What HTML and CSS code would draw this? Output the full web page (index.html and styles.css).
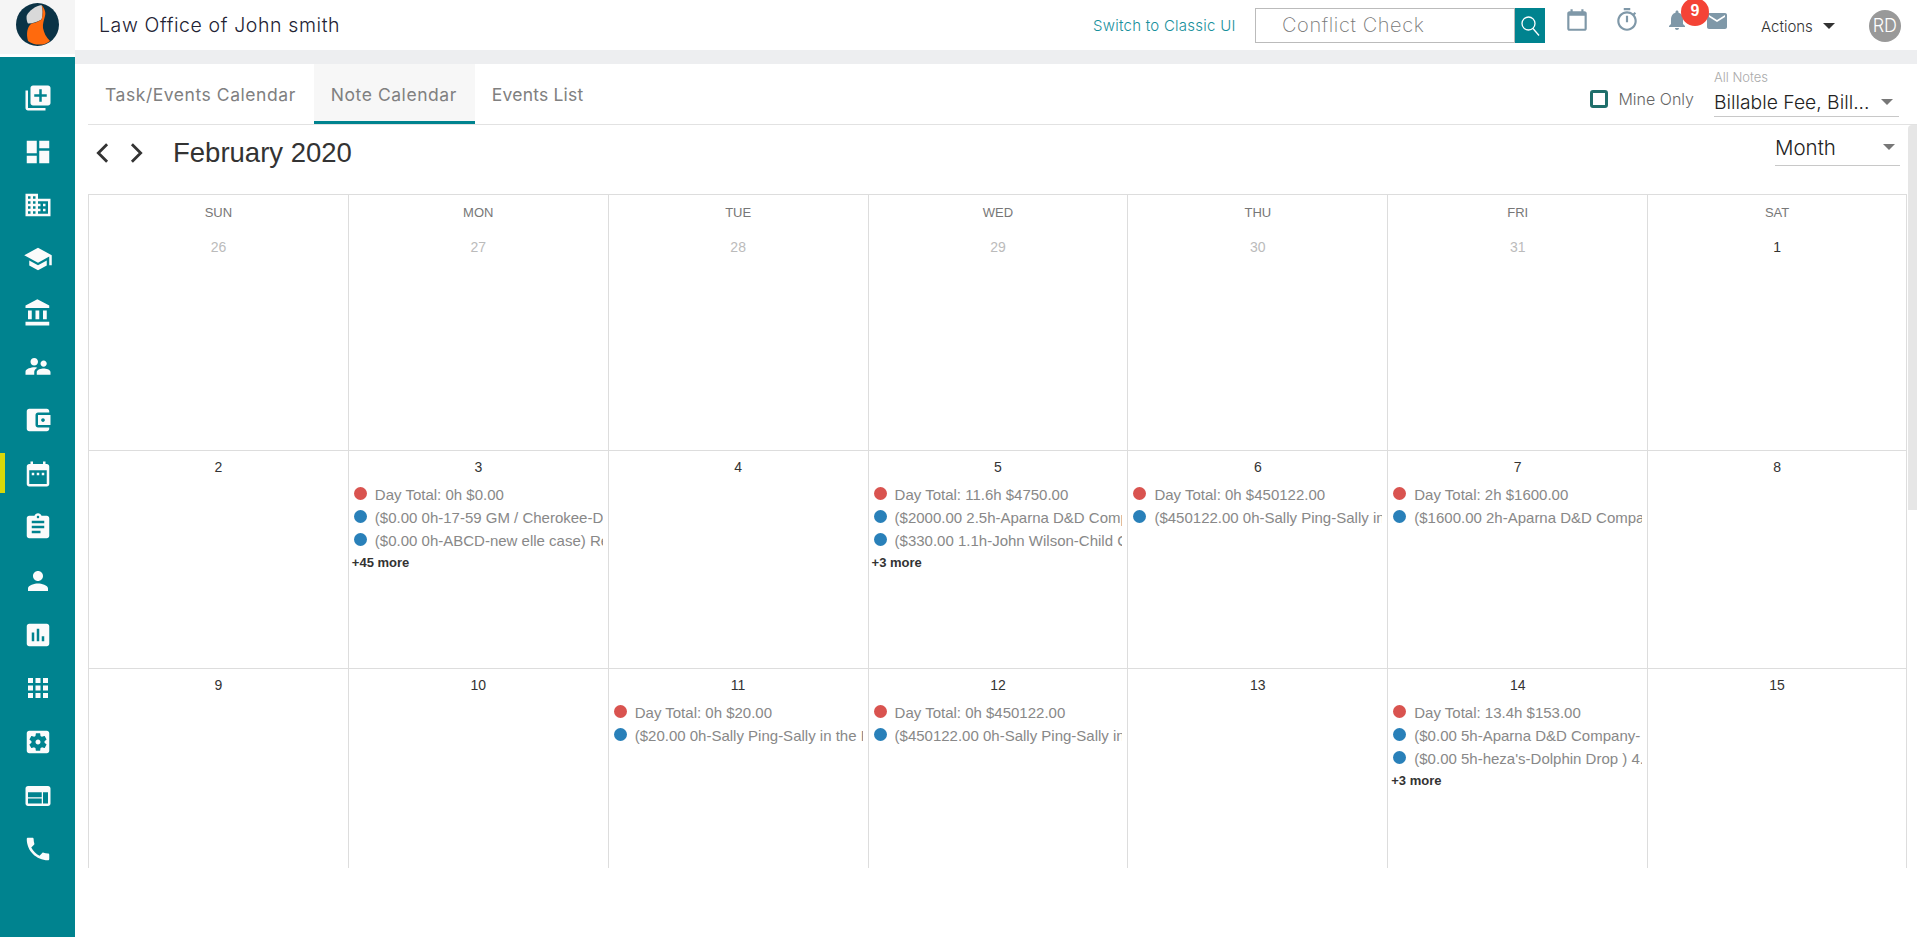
FILE: index.html
```html
<!DOCTYPE html>
<html lang="en">
<head>
<meta charset="utf-8">
<title>Law Office of John smith</title>
<link rel="stylesheet" href="styles.css">
</head>
<body>
<div class="app">
  <aside class="side">
    <div class="logo">
      <svg width="43" height="43" viewBox="0 0 43 43"><circle cx="21.5" cy="21.5" r="21.5" fill="#0b3346"/><path d="M25.600 2C20 3 13 7 10.600 13C10.300 16 11 19 12 20.600C17 20.500 22 19 25.600 16.600C27 12 27 6 25.600 2Z" fill="#d9d9d9"/><path d="M25.600 2C29 6 30 10 29 13C28 17 26.500 21 27 25C28 30 30 34 34 38C31 40.500 27 41.800 24 41.600C20 41.800 15 40.500 12 38C11 34 10.800 31 11.300 28C12 25 13 22.500 15.600 20.600C19 20 23 18.500 25.600 16.600C27 12 27 6 25.600 2Z" fill="#ff6a0d"/></svg>
    </div>
    <nav class="nav">
      <a class="nav-item"><svg class="nav-icon" viewBox="0 0 24 24"><path d="M4 6H2v14c0 1.1.9 2 2 2h14v-2H4V6zm16-4H8c-1.1 0-2 .9-2 2v12c0 1.1.9 2 2 2h12c1.1 0 2-.9 2-2V4c0-1.1-.9-2-2-2zm-1 9h-4v4h-2v-4H9V9h4V5h2v4h4v2z"/></svg></a>
      <a class="nav-item"><svg class="nav-icon" viewBox="0 0 24 24"><path d="M3 13h8V3H3v10zm0 8h8v-6H3v6zm10 0h8V11h-8v10zm0-18v6h8V3h-8z"/></svg></a>
      <a class="nav-item"><svg class="nav-icon" viewBox="0 0 24 24"><path d="M12 7V3H2v18h20V7H12zM6 19H4v-2h2v2zm0-4H4v-2h2v2zm0-4H4V9h2v2zm0-4H4V5h2v2zm4 12H8v-2h2v2zm0-4H8v-2h2v2zm0-4H8V9h2v2zm0-4H8V5h2v2zm10 12h-8v-2h2v-2h-2v-2h2v-2h-2V9h8v10zm-2-8h-2v2h2v-2zm0 4h-2v2h2v-2z"/></svg></a>
      <a class="nav-item"><svg class="nav-icon" viewBox="0 0 24 24"><path d="M5 13.18v4L12 21l7-3.82v-4L12 17l-7-3.82zM12 3L1 9l11 6 9-4.91V17h2V9L12 3z"/></svg></a>
      <a class="nav-item"><svg class="nav-icon" viewBox="0 0 24 24"><path d="M4 10v7h3v-7H4zm6 0v7h3v-7h-3zM2 22h19v-3H2v3zm14-12v7h3v-7h-3zm-4.5-9L2 6v2h19V6l-9.5-5z"/></svg></a>
      <a class="nav-item"><svg class="nav-icon" viewBox="0 0 24 24"><path d="M16.5 12.5c1.4 0 2.5-1.1 2.5-2.5s-1.1-2.5-2.5-2.5S14 8.600 14 10s1.100 2.500 2.500 2.500zM9 11.500c1.700 0 3-1.300 3-3s-1.300-3-3-3-3 1.300-3 3 1.300 3 3 3zM16.500 14c-1.800 0-5.500.900-5.500 2.800V19h11v-2.200c0-1.900-3.700-2.800-5.500-2.800zM9 13c-2.300 0-7 1.200-7 3.500V19h7v-2.200c0-.900.300-2.300 2.400-3.500C10.500 13.100 9.600 13 9 13z"/></svg></a>
      <a class="nav-item"><svg class="nav-icon" viewBox="0 0 24 24"><path d="M21 18v1c0 1.100-.9 2-2 2H5c-1.110 0-2-.9-2-2V5c0-1.100.89-2 2-2h14c1.100 0 2 .9 2 2v1h-9c-1.110 0-2 .9-2 2v8c0 1.100.89 2 2 2h9zm-9-2h10V8H12v8zm4-2.500c-.83 0-1.500-.67-1.500-1.500s.67-1.500 1.500-1.500 1.500.67 1.500 1.500-.67 1.500-1.500 1.500z"/></svg></a>
      <a class="nav-item active"><svg class="nav-icon" viewBox="0 0 24 24"><path d="M9 11H7v2h2v-2zm4 0h-2v2h2v-2zm4 0h-2v2h2v-2zm2-7h-1V2h-2v2H8V2H6v2H5c-1.110 0-1.990.9-1.990 2L3 20c0 1.100.89 2 2 2h14c1.100 0 2-.9 2-2V6c0-1.100-.9-2-2-2zm0 16H5V9h14v11z"/></svg></a>
      <a class="nav-item"><svg class="nav-icon" viewBox="0 0 24 24"><path d="M19 3h-4.180C14.400 1.840 13.300 1 12 1c-1.300 0-2.400.84-2.820 2H5c-1.100 0-2 .9-2 2v14c0 1.100.9 2 2 2h14c1.100 0 2-.9 2-2V5c0-1.100-.9-2-2-2zm-7 0c.55 0 1 .45 1 1s-.45 1-1 1-1-.45-1-1 .45-1 1-1zm2 14H7v-2h7v2zm3-4H7v-2h10v2zm0-4H7V7h10v2z"/></svg></a>
      <a class="nav-item"><svg class="nav-icon" viewBox="0 0 24 24"><path d="M12 12c2.210 0 4-1.790 4-4s-1.790-4-4-4-4 1.790-4 4 1.790 4 4 4zm0 2c-2.670 0-8 1.340-8 4v2h16v-2c0-2.660-5.330-4-8-4z"/></svg></a>
      <a class="nav-item"><svg class="nav-icon" viewBox="0 0 24 24"><path d="M19 3H5c-1.100 0-2 .9-2 2v14c0 1.100.9 2 2 2h14c1.100 0 2-.9 2-2V5c0-1.100-.9-2-2-2zM9 17H7v-7h2v7zm4 0h-2V7h2v10zm4 0h-2v-4h2v4z"/></svg></a>
      <a class="nav-item"><svg class="nav-icon" viewBox="0 0 24 24"><path d="M4 8h4V4H4v4zm6 12h4v-4h-4v4zm-6 0h4v-4H4v4zm0-6h4v-4H4v4zm6 0h4v-4h-4v4zm6-10v4h4V4h-4zm-6 4h4V4h-4v4zm6 6h4v-4h-4v4zm0 6h4v-4h-4v4z"/></svg></a>
      <a class="nav-item"><svg class="nav-icon" viewBox="0 0 24 24"><path d="M12 10c-1.100 0-2 .9-2 2s.9 2 2 2 2-.9 2-2-.9-2-2-2zm7-7H5c-1.110 0-2 .9-2 2v14c0 1.100.89 2 2 2h14c1.110 0 2-.9 2-2V5c0-1.100-.89-2-2-2zm-1.750 9c0 .23-.02.46-.05.68l1.480 1.160c.13.11.17.3.08.45l-1.400 2.420c-.09.15-.27.21-.43.15l-1.740-.7c-.36.28-.76.51-1.180.69l-.26 1.850c-.03.17-.18.3-.35.3h-2.800c-.17 0-.32-.13-.35-.29l-.26-1.850c-.43-.18-.82-.41-1.180-.69l-1.740.7c-.16.06-.34 0-.43-.15l-1.400-2.420c-.09-.15-.05-.34.08-.45l1.480-1.160c-.03-.23-.05-.46-.05-.69 0-.23.02-.46.05-.68l-1.480-1.160c-.13-.11-.17-.3-.08-.45l1.400-2.420c.09-.15.27-.21.43-.15l1.740.7c.36-.28.76-.51 1.180-.69l.26-1.850c.03-.17.18-.3.35-.3h2.800c.17 0 .32.13.35.29l.26 1.850c.43.18.82.41 1.180.69l1.740-.7c.16-.06.34 0 .43.15l1.400 2.420c.09.15.05.34-.08.45l-1.480 1.160c.03.23.05.46.05.69z"/></svg></a>
      <a class="nav-item"><svg class="nav-icon" viewBox="0 0 24 24"><path d="M20 4H4c-1.100 0-1.990.9-1.990 2L2 18c0 1.100.9 2 2 2h16c1.100 0 2-.9 2-2V6c0-1.100-.9-2-2-2zm-5 14H4v-4h11v4zm0-5H4V9h11v4zm5 5h-4V9h4v9z"/></svg></a>
      <a class="nav-item"><svg class="nav-icon" viewBox="0 0 24 24"><path d="M6.620 10.790c1.440 2.830 3.760 5.140 6.590 6.590l2.200-2.200c.27-.27.67-.36 1.020-.24 1.120.37 2.330.57 3.570.57.55 0 1 .45 1 1V20c0 .55-.45 1-1 1-9.390 0-17-7.610-17-17 0-.55.45-1 1-1h3.500c.55 0 1 .45 1 1 0 1.250.2 2.450.57 3.570.11.35.03.74-.25 1.020l-2.200 2.200z"/></svg></a>
    </nav>
  </aside>

  <main class="main">
    <header class="top">
      <div class="firm">Law Office of John smith</div>
      <a class="classic">Switch to Classic UI</a>
      <div class="search">
        <div class="search-input">Conflict Check</div>
        <div class="search-btn"><svg width="26" height="26" viewBox="0 0 26 26" fill="none" stroke="#fff" stroke-width="1.300"><circle cx="11.500" cy="10.500" r="6.500"/><path d="M16 15.500l6 7"/></svg></div>
      </div>
      <svg class="top-icon cal-icon" viewBox="0 0 24 24"><path d="M19 4h-1V2h-2v2H8V2H6v2H5C3.900 4 3 4.900 3 6v14c0 1.100.9 2 2 2h14c1.100 0 2-.9 2-2V6c0-1.100-.9-2-2-2zm0 16H5V8h14v12z"/></svg>
      <svg class="top-icon timer-icon" viewBox="0 0 24 24"><path d="M15 1H9v2h6V1zm-4 13h2V8h-2v6zm8.030-6.610l1.420-1.420c-.43-.51-.9-.99-1.410-1.410l-1.420 1.420C16.070 4.740 14.120 4 12 4c-4.970 0-9 4.030-9 9s4.020 9 9 9 9-4.030 9-9c0-2.120-.74-4.070-1.970-5.610zM12 20c-3.870 0-7-3.130-7-7s3.130-7 7-7 7 3.130 7 7-3.130 7-7 7z"/></svg>
      <div class="bell">
        <svg class="top-icon" viewBox="0 0 24 24"><path d="M12 22c1.100 0 2-.9 2-2h-4c0 1.100.89 2 2 2zm6-6v-5c0-3.070-1.640-5.640-4.500-6.320V4c0-.83-.67-1.500-1.500-1.500s-1.500.67-1.500 1.500v.68C7.630 5.360 6 7.920 6 11v5l-2 2v1h16v-1l-2-2z"/></svg>
        <span class="badge">9</span>
      </div>
      <svg class="top-icon mail-icon" viewBox="0 0 24 24"><path d="M20 4H4c-1.100 0-1.990.9-1.990 2L2 18c0 1.100.9 2 2 2h16c1.100 0 2-.9 2-2V6c0-1.100-.9-2-2-2zm0 4l-8 5-8-5V6l8 5 8-5v2z"/></svg>
      <div class="actions">Actions<span class="caret caret-dark"></span></div>
      <div class="avatar">RD</div>
    </header>
    <div class="band"></div>
    <section class="content">
      <div class="tabbar">
        <a class="tab">Task/Events Calendar</a>
        <a class="tab on">Note Calendar</a>
        <a class="tab tab-last">Events List</a>
        <label class="mine"><span class="check"></span>Mine Only</label>
        <div class="notes">
          <div class="notes-label">All Notes</div>
          <div class="select notes-select"><span>Billable Fee, Bill...</span><span class="caret"></span></div>
        </div>
      </div>
      <div class="toolbar">
        <svg class="chev" viewBox="0 0 24 24"><path d="M15.500 4.500L8 12l7.500 7.500"/></svg>
        <svg class="chev chev-next" viewBox="0 0 24 24"><path d="M8.500 4.500L16 12l-7.500 7.500"/></svg>
        <h1 class="month-title">February 2020</h1>
        <div class="select month-select"><span>Month</span><span class="caret"></span></div>
      </div>
      <div class="cal">
        <div class="week week-head">
          <div class="day"><div class="dow">SUN</div><div class="num off">26</div></div>
          <div class="day"><div class="dow">MON</div><div class="num off">27</div></div>
          <div class="day"><div class="dow">TUE</div><div class="num off">28</div></div>
          <div class="day"><div class="dow">WED</div><div class="num off">29</div></div>
          <div class="day"><div class="dow">THU</div><div class="num off">30</div></div>
          <div class="day"><div class="dow">FRI</div><div class="num off">31</div></div>
          <div class="day"><div class="dow">SAT</div><div class="num">1</div></div>
        </div>
        <div class="week week-two">
          <div class="day"><div class="num">2</div></div>
          <div class="day"><div class="num">3</div>
            <div class="ev"><i class="dot red"></i><span class="ev-text">Day Total: 0h $0.00</span></div>
            <div class="ev"><i class="dot blue"></i><span class="ev-text">($0.00 0h-17-59 GM / Cherokee-D</span></div>
            <div class="ev"><i class="dot blue"></i><span class="ev-text">($0.00 0h-ABCD-new elle case) Re</span></div>
            <div class="more">+45 more</div>
          </div>
          <div class="day"><div class="num">4</div></div>
          <div class="day"><div class="num">5</div>
            <div class="ev"><i class="dot red"></i><span class="ev-text">Day Total: 11.6h $4750.00</span></div>
            <div class="ev"><i class="dot blue"></i><span class="ev-text">($2000.00 2.5h-Aparna D&amp;D Comp</span></div>
            <div class="ev"><i class="dot blue"></i><span class="ev-text">($330.00 1.1h-John Wilson-Child C</span></div>
            <div class="more">+3 more</div>
          </div>
          <div class="day"><div class="num">6</div>
            <div class="ev"><i class="dot red"></i><span class="ev-text">Day Total: 0h $450122.00</span></div>
            <div class="ev"><i class="dot blue"></i><span class="ev-text">($450122.00 0h-Sally Ping-Sally in</span></div>
          </div>
          <div class="day"><div class="num">7</div>
            <div class="ev"><i class="dot red"></i><span class="ev-text">Day Total: 2h $1600.00</span></div>
            <div class="ev"><i class="dot blue"></i><span class="ev-text">($1600.00 2h-Aparna D&amp;D Compa</span></div>
          </div>
          <div class="day"><div class="num">8</div></div>
        </div>
        <div class="week week-three">
          <div class="day"><div class="num">9</div></div>
          <div class="day"><div class="num">10</div></div>
          <div class="day"><div class="num">11</div>
            <div class="ev"><i class="dot red"></i><span class="ev-text">Day Total: 0h $20.00</span></div>
            <div class="ev"><i class="dot blue"></i><span class="ev-text">($20.00 0h-Sally Ping-Sally in the P</span></div>
          </div>
          <div class="day"><div class="num">12</div>
            <div class="ev"><i class="dot red"></i><span class="ev-text">Day Total: 0h $450122.00</span></div>
            <div class="ev"><i class="dot blue"></i><span class="ev-text">($450122.00 0h-Sally Ping-Sally in</span></div>
          </div>
          <div class="day"><div class="num">13</div></div>
          <div class="day"><div class="num">14</div>
            <div class="ev"><i class="dot red"></i><span class="ev-text">Day Total: 13.4h $153.00</span></div>
            <div class="ev"><i class="dot blue"></i><span class="ev-text">($0.00 5h-Aparna D&amp;D Company-</span></div>
            <div class="ev"><i class="dot blue"></i><span class="ev-text">($0.00 5h-heza's-Dolphin Drop ) 4.5</span></div>
            <div class="more">+3 more</div>
          </div>
          <div class="day"><div class="num">15</div></div>
        </div>
      </div>
      <div class="scroll-thumb"></div>
    </section>
  </main>
</div>
</body>
</html>
```
FILE: styles.css
```css
* { box-sizing: border-box; }
html, body { margin: 0; height: 100%; background: #fff; overflow: hidden; }
body { font-family: "Liberation Sans", Arial, sans-serif; color: #333; }

.app { display: grid; grid-template-columns: 75px 1fr; height: 937px; }

/* sidebar */
.side { display: flex; flex-direction: column; background: #fff; }
.logo { height: 54px; margin-bottom: 3px; background: #f5f5f5; display: flex; justify-content: center; padding-top: 3px; }
.nav { flex: 1; background: #00838f; padding-top: 14px; }
.nav-item { display: flex; align-items: center; justify-content: center; height: 53.7px; position: relative; }
.nav-item.active::before { content: ""; position: absolute; left: 0; top: 6px; width: 5px; height: 40px; background: #d9d80a; }
.nav-icon { width: 30px; height: 30px; fill: #fbfbfb; }

/* top bar */
.main { display: flex; flex-direction: column; min-width: 0; }
.top { height: 50px; display: flex; align-items: center; font-family: "Inter", "Noto Sans", sans-serif; }
.firm { width: 1018px; padding-left: 24px; font-size: 19.500px; font-weight: 300; color: #223; letter-spacing: .6px; }
.classic { width: 162px; font-size: 15px; font-weight: 300; color: #17909c; letter-spacing: .25px; white-space: nowrap; }
.search { display: flex; width: 290px; height: 35px; margin-top: 1px; }
.search-input { flex: 1; border: 1px solid #bbb; padding-left: 26px; font-size: 20px; font-weight: 200; color: #777; line-height: 33px; letter-spacing: .6px; }
.search-btn { width: 30px; background: #00838f; display: flex; align-items: center; justify-content: center; }
.top-icon { width: 24px; height: 24px; fill: #7f98a8; display: block; }
.cal-icon { margin: -11px 0 0 19px; width: 26px; height: 26px; }
.timer-icon { margin: -11px 0 0 24px; width: 26px; height: 26px; }
.bell { position: relative; margin: -11px 0 0 25px; }
.badge { position: absolute; left: 16px; top: -10px; width: 28px; height: 28px; border-radius: 50%; background: #f44336; color: #fff; font: bold 16px/26px "Liberation Sans", Arial, sans-serif; text-align: center; }
.mail-icon { margin: -9px 0 0 16px; }
.actions { margin-left: 32px; font-size: 15px; font-weight: 300; color: #333; display: flex; align-items: center; margin-top: 2px; }
.actions .caret { margin-left: 10px; }
.avatar { width: 32px; height: 32px; margin-left: 34px; margin-top: 2px; border-radius: 50%; background: #999; color: #fff; font-size: 18px; font-weight: 300; text-align: center; line-height: 32px; }
.band { height: 14px; background: #edeef0; }

/* content */
.content { position: relative; flex: 1; padding-left: 13px; font-family: "Inter", "Noto Sans", sans-serif; }
.tabbar { height: 61px; display: flex; align-items: stretch; border-bottom: 1px solid #e2e2e2; }
.tab { padding: 3px 18px 0 17px; font-size: 17.500px; font-weight: 400; letter-spacing: .55px; color: #808080; display: flex; align-items: center; white-space: nowrap; border-bottom: 3px solid transparent; }
.tab.on { background: #f7f7f7; border-bottom-color: #00838f; }
.tab-last { letter-spacing: .2px; }
.mine { margin-left: auto; display: flex; align-items: center; font-size: 16px; font-weight: 300; color: #666; margin-top: 10px; }
.check { width: 18px; height: 18px; border: 3px solid #1f6f6b; border-radius: 3px; margin-right: 10px; }
.notes { width: 185px; margin: 5px 18px 0 20px; }
.notes-label { font-size: 13px; font-weight: 300; color: #aaa; line-height: 16px; }
.select { display: flex; justify-content: space-between; align-items: center; border-bottom: 1px solid #c8c8c8; font-weight: 300; color: #222; }
.notes-select { height: 32px; padding: 2px 6px 0 0; font-size: 19.300px; }
.caret { width: 0; height: 0; border-left: 6px solid transparent; border-right: 6px solid transparent; border-top: 6px solid #777; }
.caret-dark { border-top-color: #333; }

.toolbar { height: 69px; display: flex; align-items: flex-start; }
.chev { width: 28px; height: 28px; margin-top: 14px; fill: none; stroke: #333; stroke-width: 2.400; }
.chev:first-child { margin-left: 1px; }
.chev-next { margin-left: 5px; }
.month-title { margin: 7px 0 0 23px; font: 400 27.500px/42px "Liberation Sans", Arial, sans-serif; color: #333; }
.month-select { margin: 0 17px 0 auto; width: 125px; height: 41px; padding: 4px 5px 0 0; font-size: 20.500px; }

/* calendar */
.cal { height: 674px; width: 1819px; overflow: hidden; font-family: "Liberation Sans", Arial, sans-serif; border-top: 1px solid #ddd; }
.week { display: grid; grid-template-columns: repeat(7, 1fr); border-top: 1px solid #ddd; }
.week:first-child { border-top: 0; }
.week-head { height: 255px; }
.week-two { height: 218px; }
.week-three { height: 218px; }
.day { border-left: 1px solid #ddd; min-width: 0; overflow: hidden; padding-top: 5px; }
.day:last-child { border-right: 1px solid #ddd; }
.dow { font-size: 13px; line-height: 22px; color: #777; text-align: center; margin: 2px 0 12px; }
.num { font-size: 14px; line-height: 22px; color: #333; text-align: center; margin-bottom: 5px; }
.num.off { color: #bbb; }
.ev { display: flex; align-items: center; height: 23px; padding: 0 5px; font-size: 15px; color: #888; }
.ev-text { overflow: hidden; white-space: nowrap; flex: 1; }
.dot { flex: none; width: 13px; height: 13px; border-radius: 50%; margin: -2px 8px 0 0; }
.red { background: #d9534f; }
.blue { background: #2980b9; }
.more { padding-left: 3px; font-size: 13px; font-weight: 700; line-height: 22px; color: #333; }

.scroll-thumb { position: absolute; right: 0; top: 61px; width: 9px; height: 385px; background: #e6e6e6; border-radius: 4px 0 0 0; }
```
